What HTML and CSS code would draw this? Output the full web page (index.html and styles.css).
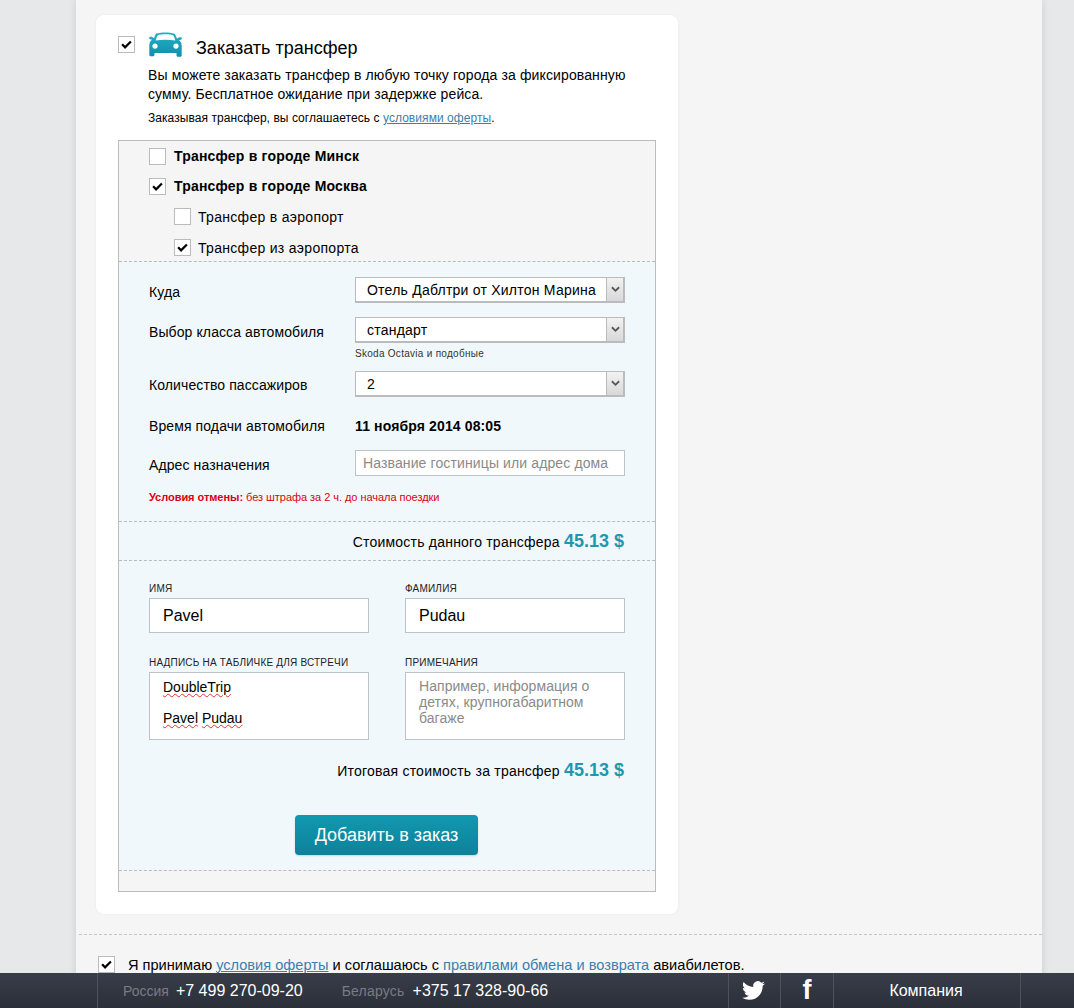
FILE: index.html
```html
<!DOCTYPE html>
<html lang="ru">
<head>
<meta charset="utf-8">
<title>Заказать трансфер</title>
<link rel="stylesheet" href="styles.css">
</head>
<body>
<svg class="defs" width="0" height="0" aria-hidden="true"><symbol id="check" viewBox="0 0 10 8"><path d="M1 3.8 3.7 6.6 9 1.2" fill="none" stroke="#000" stroke-width="2"/></symbol></svg>
<main class="page">
  <section class="card">
    <div class="head">
      <span class="box checked"><svg class="tick"><use href="#check"/></svg></span>
      <svg class="car" viewBox="0 0 35 25" aria-hidden="true">
        <defs><linearGradient id="carg" x1="0" y1="0" x2="0" y2="1"><stop offset="0" stop-color="#22b1c9"/><stop offset="1" stop-color="#118fa9"/></linearGradient></defs>
        <path fill="url(#carg)" fill-rule="evenodd" d="M9 1.6C13 0 22 0 26 1.6c1.2.5 2 2.2 3 5.2.7-1 2-1.6 4-1.5 1 .1 1.2 1.6.4 2.1l-2.4.8c1.6 1.3 2.7 3 2.7 5.6v9.4c0 .9-.6 1.5-1.4 1.5h-2.4c-.8 0-1.4-.6-1.4-1.5V21H6.500v1.700c0 .9-.6 1.500-1.400 1.500H2.700c-.8 0-1.400-.6-1.400-1.500v-9.400c0-2.600 1.100-4.300 2.700-5.600l-2.400-.8c-.8-.5-.6-2 .4-2.100 2-.1 3.300.5 4 1.500 1-3 1.800-4.700 3-5.200ZM10 3.300c-.8.4-1.600 2.400-2.300 5.200 6-1 13.600-1 19.600 0-.7-2.800-1.500-4.800-2.300-5.200-3.500-1.300-11.500-1.300-15 0ZM7 11.500a2.600 2.600 0 1 0 0 5.200 2.600 2.600 0 0 0 0-5.200Zm21 0a2.600 2.600 0 1 0 0 5.200 2.600 2.600 0 0 0 0-5.200Z"/>
      </svg>
      <h2 class="title">Заказать трансфер</h2>
    </div>
    <p class="lead">Вы можете заказать трансфер в любую точку города за фиксированную сумму. Бесплатное ожидание при задержке рейса.</p>
    <p class="terms">Заказывая трансфер, вы соглашаетесь с <a href="#">условиями оферты</a>.</p>

    <div class="panel">
      <div class="options">
        <div class="opt strong"><span class="box"></span>Трансфер в городе Минск</div>
        <div class="opt strong"><span class="box checked"><svg class="tick"><use href="#check"/></svg></span>Трансфер в городе Москва</div>
        <div class="opt sub"><span class="box"></span>Трансфер в аэропорт</div>
        <div class="opt sub"><span class="box checked"><svg class="tick"><use href="#check"/></svg></span>Трансфер из аэропорта</div>
      </div>
      <div class="details">
        <div class="row r-to"><label class="lbl">Куда</label><div class="select"><span class="value">Отель Даблтри от Хилтон Марина</span><span class="arrow"><svg viewBox="0 0 10 7"><path d="M1 1 5 5 9 1" fill="none" stroke="#555" stroke-width="2"/></svg></span></div></div>
        <div class="row r-class"><label class="lbl">Выбор класса автомобиля</label><div class="col"><div class="select"><span class="value">стандарт</span><span class="arrow"><svg viewBox="0 0 10 7"><path d="M1 1 5 5 9 1" fill="none" stroke="#555" stroke-width="2"/></svg></span></div><div class="hint">Skoda Octavia и подобные</div></div></div>
        <div class="row r-pax"><label class="lbl">Количество пассажиров</label><div class="select"><span class="value">2</span><span class="arrow"><svg viewBox="0 0 10 7"><path d="M1 1 5 5 9 1" fill="none" stroke="#555" stroke-width="2"/></svg></span></div></div>
        <div class="row r-time"><label class="lbl">Время подачи автомобиля</label><b class="time">11 ноября 2014 08:05</b></div>
        <div class="row r-addr"><label class="lbl">Адрес назначения</label><input class="addr" placeholder="Название гостиницы или адрес дома"></div>
        <p class="cancel"><b>Условия отмены:</b> без штрафа за 2 ч. до начала поездки</p>
      </div>
      <div class="price price-one">Стоимость данного трансфера <b>45.13 $</b></div>
      <div class="contact">
        <div class="grid">
          <div class="field"><label class="cap">Имя</label><input class="text" value="Pavel"></div>
          <div class="field"><label class="cap">Фамилия</label><input class="text" value="Pudau"></div>
          <div class="field f2"><label class="cap">Надпись на табличке для встречи</label><div class="area plate"><span class="sq">DoubleTrip</span><span class="sq">Pavel</span> <span class="sq">Pudau</span></div></div>
          <div class="field f2"><label class="cap">Примечания</label><div class="area notes">Например, информация о детях, крупногабаритном багаже</div></div>
        </div>
        <div class="price price-total">Итоговая стоимость за трансфер <b>45.13 $</b></div>
        <div class="action"><button class="add" type="button">Добавить в заказ</button></div>
      </div>
      <div class="tail"></div>
    </div>
  </section>
  <hr class="rule">
  <div class="accept"><span class="box checked"><svg class="tick"><use href="#check"/></svg></span><span>Я принимаю <a href="#">условия оферты</a> и соглашаюсь с <a class="plain" href="#">правилами обмена и возврата</a> авиабилетов.</span></div>
</main>
<footer class="bar">
  <div class="phones">
    <span class="country">Россия</span><span class="phone">+7 499 270-09-20</span>
    <span class="country c2">Беларусь</span><span class="phone">+375 17 328-90-66</span>
  </div>
  <a class="cell tw" href="#"><svg viewBox="0 0 24 24"><path fill="#fff" d="M23.953 4.57a10 10 0 01-2.825.775 4.958 4.958 0 002.163-2.723c-.951.555-2.005.959-3.127 1.184a4.92 4.92 0 00-8.384 4.482C7.69 8.095 4.067 6.13 1.64 3.162a4.822 4.822 0 00-.666 2.475c0 1.71.87 3.213 2.188 4.096a4.904 4.904 0 01-2.228-.616v.06a4.923 4.923 0 003.946 4.827 4.996 4.996 0 01-2.212.085 4.936 4.936 0 004.604 3.417 9.867 9.867 0 01-6.102 2.105c-.39 0-.779-.023-1.17-.067a13.995 13.995 0 007.557 2.209c9.053 0 13.998-7.496 13.998-13.985 0-.21 0-.42-.015-.63A9.935 9.935 0 0024 4.59z"/></svg></a>
  <a class="cell fb" href="#">f</a>
  <a class="cell company" href="#">Компания</a>
  <span class="cell rest"></span>
</footer>
</body>
</html>
```
FILE: styles.css
```css
* { box-sizing: border-box; }
html, body { margin: 0; height: 1008px; overflow: hidden; }
body { background: #e7e8ea; font-family: "Liberation Sans", Arial, sans-serif; font-size: 14px; color: #000; }
.defs { position: absolute; }
a { color: #3a7fb0; }
p { margin: 0; }

.page { width: 966px; height: 1008px; margin-left: 76px; padding: 15px 0 0 20px; background: #f5f5f5; box-shadow: 0 0 8px rgba(0,0,0,.12); }

.card { width: 582px; height: 899px; padding: 17px 22px 0; background: #fff; border-radius: 8px; box-shadow: 0 0 3px rgba(0,0,0,.06); }
.head { display: flex; align-items: center; height: 25px; }
.box { flex: none; display: flex; align-items: center; justify-content: center; width: 17px; height: 17px; background: #fff; border: 1px solid #bbb; }
.tick { width: 11px; height: 9px; }
.car { width: 35px; height: 25px; margin-left: 13px; }
.title { margin: 0 0 0 13px; font-size: 18px; font-weight: 400; line-height: 25px; position: relative; top: 4px; }
.lead { width: 490px; margin: 9px 0 0 30px; line-height: 19px; letter-spacing: .12px; }
.terms { margin: 6px 0 0 30px; font-size: 12px; line-height: 16px; letter-spacing: .06px; }

.panel { width: 538px; height: 752px; margin-top: 14px; border: 1px solid #bbb; background: #f1f8fc; display: flex; flex-direction: column; }
.options { height: 121px; padding: 0 30px; background: #f5f5f5; border-bottom: 1px dashed #bbb; }
.opt { display: flex; align-items: center; height: 30px; }
.opt .box { margin-right: 8px; }
.strong { font-weight: 700; letter-spacing: .2px; }
.sub { padding-left: 25px; height: 31px; letter-spacing: .3px; }
.sub .box { margin-right: 7px; }

.details { height: 259px; padding: 15px 30px 0; position: relative; }
.row { display: flex; }
.lbl { width: 206px; flex: none; letter-spacing: .1px; }
.col { width: 270px; }
.select { display: flex; width: 270px; height: 26px; background: #fff; border: 1px solid #bbb; border-width: 1px 2px 2px 1px; }
.value { flex: 1; padding-left: 11px; line-height: 24px; font-size: 14px; letter-spacing: .23px; }
.arrow { display: flex; align-items: center; justify-content: center; width: 17px; background: linear-gradient(#f2f2f2, #d8d8d8); border-left: 1px solid #bbb; }
.arrow svg { width: 9px; height: 7px; }
.hint { font-size: 10px; line-height: 12px; margin-top: 5px; color: #333; letter-spacing: .28px; }
.r-to .lbl { padding-top: 7px; }
.r-class { margin-top: 14px; }
.r-class .lbl { padding-top: 7px; }
.r-pax { margin-top: 11px; }
.r-pax .lbl { padding-top: 6px; }
.r-time { margin-top: 21px; line-height: 16px; }
.time { font-weight: 700; letter-spacing: .13px; }
.r-addr { margin-top: 16px; }
.r-addr .lbl { padding-top: 7px; }
.addr { width: 270px; height: 26px; padding: 0 7px; border: 1px solid #bcc4c8; font: 14px "Liberation Sans", Arial, sans-serif; letter-spacing: .12px; background: #fff; }
.addr::placeholder, .notes { color: #8a8a8a; opacity: 1; }
.cancel { margin-top: 14px; font-size: 11px; line-height: 14px; color: #d9000f; letter-spacing: -.04px; }

.price { text-align: right; padding-right: 31px; letter-spacing: .22px; }
.price b { font-size: 18px; color: #1f97b0; letter-spacing: 0; }
.price-one { height: 40px; line-height: 38px; border-top: 1px dashed #bbb; border-bottom: 1px dashed #bbb; }
.contact { height: 309px; padding: 21px 30px 0; }
.grid { display: grid; grid-template-columns: 220px 220px; column-gap: 36px; }
.field { display: flex; flex-direction: column; }
.cap { font-size: 10px; line-height: 14px; text-transform: uppercase; color: #222; margin-bottom: 2px; letter-spacing: .2px; }
.f2 { margin-top: 23px; }
.text { width: 220px; height: 35px; padding: 0 13px; border: 1px solid #bcc4c8; background: #fff; font: 16px "Liberation Sans", Arial, sans-serif; color: #000; }
.area { height: 68px; padding: 6px 13px; border: 1px solid #bcc4c8; background: #fff; }
.plate { line-height: 31px; padding-top: 0; }
.plate .sq:first-child { display: block; margin-top: -1px; }
.sq { text-decoration: underline wavy #d33 1px; }
.notes { line-height: 16px; padding-top: 5px; letter-spacing: .05px; }
.price-total { line-height: 30px; margin: 15px -30px 0 -30px; height: 30px; padding-right: 31px; letter-spacing: .22px; }
.action { display: flex; justify-content: center; padding-top: 30px; }
.add { width: 183px; height: 40px; margin-left: -1px; border: 0; border-radius: 4px; background: linear-gradient(#1199b0, #0e8199); color: #fff; font: 18px "Liberation Sans", Arial, sans-serif; box-shadow: 0 1px 2px rgba(0,0,0,.15); }
.tail { flex: 1; background: #f5f5f5; border-top: 1px dashed #bbb; }

.rule { margin: 20px 0 0 -17px; border: 0; border-top: 1px dashed #c4c4c4; height: 0; }
.accept { display: flex; align-items: center; margin: 21px 0 0 2px; gap: 13px; font-size: 14.6px; height: 17px; }
.accept a { text-decoration: underline; }
.accept a.plain { text-decoration: none; }

.bar { position: fixed; left: 0; right: 0; bottom: 0; height: 35px; display: flex; background: linear-gradient(#383d49, #2b2f39); color: #fff; }
.phones { width: 631px; margin-left: 97px; padding-left: 25px; display: flex; align-items: center; border-left: 1px solid #4d525c; }
.country { color: #777c85; font-size: 14px; margin-right: 7px; }
.c2 { margin-left: 39px; margin-right: 8px; letter-spacing: .2px; }
.phone { font-size: 16px; }
.cell { display: flex; align-items: center; justify-content: center; height: 35px; border-left: 1px solid #4d525c; color: #fff; text-decoration: none; }
.tw { width: 52px; }
.tw svg { width: 23px; height: 23px; margin-left: -3px; }
.fb { width: 53px; font-weight: 700; font-size: 27px; }
.company { width: 187px; padding-right: 2px; font-size: 16px; }
.rest { flex: 1; }
```
